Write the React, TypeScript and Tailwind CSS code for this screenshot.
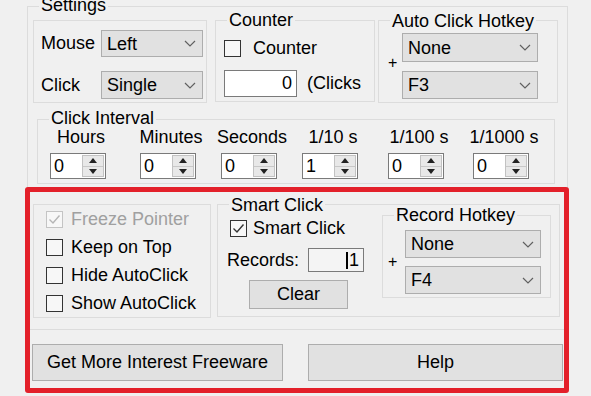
import React from 'react'

type Kids = { children?: React.ReactNode }

function Group({ label, className, labelTop, children }: Kids & { label?: string; className: string; labelTop?: string }) {
  return (
    <div className={`relative border border-[#dcdcdc] ${className}`}>
      {label && (
        <span className={`absolute left-[11px] bg-[#f0f0f0] px-[2px] leading-[20px] whitespace-nowrap ${labelTop ?? 'top-[-11px]'}`}>
          {label}
        </span>
      )}
      {children}
    </div>
  )
}

function Select({ value, className }: { value: string; className: string }) {
  return (
    <div className={`flex items-center justify-between border border-[#adadad] bg-[#e1e1e1] pl-[5px] pr-[6px] ${className}`}>
      <span className="leading-[20px]">{value}</span>
      <svg width="12" height="7" viewBox="0 0 12 7">
        <path d="M1 1l5 5 5-5" fill="none" stroke="#606060" strokeWidth="1.2" />
      </svg>
    </div>
  )
}

function Check({ checked, disabled }: { checked?: boolean; disabled?: boolean }) {
  return (
    <div
      className={`flex h-[17px] w-[17px] shrink-0 items-center justify-center border bg-[#f7f7f7] ${
        disabled ? 'border-[#c4c4c4]' : 'border-[#333333]'
      }`}
    >
      {checked && (
        <svg width="13" height="11" viewBox="0 0 13 11">
          <path
            d="M1.5 5.5l3.5 3.5 6.5-7.5"
            fill="none"
            stroke={disabled ? '#b5b5b5' : '#333333'}
            strokeWidth="1.4"
          />
        </svg>
      )}
    </div>
  )
}

function Spin({ value }: { value: string }) {
  return (
    <div className="flex h-[26px] w-[56px] border border-[#7a7a7a] bg-white">
      <div className="flex-1 pl-[3px] leading-[24px]">{value}</div>
      <div className="my-[1px] mr-[1px] flex w-[22px] flex-col border border-[#c2c2c2] bg-[#e8e8e8]">
        <div className="flex flex-1 items-center justify-center border-b border-[#c8c8c8]">
          <svg width="8" height="5" viewBox="0 0 8 5">
            <path d="M0 5L4 0L8 5Z" fill="#222" />
          </svg>
        </div>
        <div className="flex flex-1 items-center justify-center">
          <svg width="8" height="5" viewBox="0 0 8 5">
            <path d="M0 0L4 5L8 0Z" fill="#222" />
          </svg>
        </div>
      </div>
    </div>
  )
}

function Button({ children, className }: Kids & { className: string }) {
  return (
    <div className={`flex items-center justify-center border border-[#adadad] bg-[#e1e1e1] ${className}`}>
      {children}
    </div>
  )
}

const intervals = [
  { label: 'Hours', value: '0', ml: 'ml-[12px]' },
  { label: 'Minutes', value: '0', ml: 'ml-[34px]' },
  { label: 'Seconds', value: '0', ml: 'ml-[25px]' },
  { label: '1/10 s', value: '1', ml: 'ml-[25px]' },
  { label: '1/100 s', value: '0', ml: 'ml-[30px]' },
  { label: '1/1000 s', value: '0', ml: 'ml-[29px]' },
]

export default function App() {
  return (
    <div className="relative h-[396px] w-[591px] overflow-hidden bg-[#f0f0f0] font-['Liberation_Sans',Arial,sans-serif] text-[18px] text-black">
      {/* Settings frame */}
      <Group label="Settings" labelTop="top-[-12px]" className="ml-[27px] mt-[6px] h-[324px] w-[541px]">
        {/* Top row */}
        <div className="mt-[13px] flex items-start">
          <Group className="ml-[5px] h-[83px] w-[174px] pl-[7px] pt-[9px]">
            <div className="flex h-[27px] items-center">
              <span className="w-[60px]">Mouse</span>
              <Select value="Left" className="h-[27px] w-[102px]" />
            </div>
            <div className="mt-[14px] flex h-[28px] items-center">
              <span className="w-[60px]">Click</span>
              <Select value="Single" className="h-[28px] w-[102px]" />
            </div>
          </Group>

          <Group label="Counter" className="ml-[8px] h-[82px] w-[160px] pl-[8px] pt-[19px]">
            <div className="flex h-[16px] items-center">
              <Check />
              <span className="ml-[12px]">Counter</span>
            </div>
            <div className="mt-[14px] flex items-center">
              <div className="h-[27px] w-[73px] border border-[#7a7a7a] bg-white pr-[4px] text-right leading-[25px]">0</div>
              <span className="ml-[10px] whitespace-nowrap">(Clicks</span>
            </div>
          </Group>

          <Group label="Auto Click Hotkey" labelTop="top-[-10px]" className="ml-[3px] flex h-[83px] w-[180px] items-start pl-[9px] pt-[12px]">
            <span className="mt-[20px] w-[14px] text-[16px] leading-[20px]">+</span>
            <div className="flex flex-col gap-[9px]">
              <Select value="None" className="h-[29px] w-[136px]" />
              <Select value="F3" className="h-[28px] w-[136px]" />
            </div>
          </Group>
        </div>

        {/* Click interval */}
        <Group label="Click Interval" labelTop="top-[-12px]" className="ml-[9px] mt-[16px] flex h-[65px] w-[518px] pt-[7px]">
          {intervals.map(i => (
            <div key={i.label} className={`flex w-[56px] flex-col items-center ${i.ml}`}>
              <span className="whitespace-nowrap pl-[6px] leading-[20px]">{i.label}</span>
              <div className="mt-[6px]">
                <Spin value={i.value} />
              </div>
            </div>
          ))}
        </Group>

        {/* Bottom row */}
        <div className="mt-[20px] flex items-start">
          <Group className="ml-[5px] h-[114px] w-[178px] pl-[12px]">
            <div className="flex h-[28px] items-center">
              <Check checked disabled />
              <span className="ml-[8px] text-[#a0a0a0]">Freeze Pointer</span>
            </div>
            <div className="flex h-[28px] items-center">
              <Check />
              <span className="ml-[8px]">Keep on Top</span>
            </div>
            <div className="flex h-[28px] items-center">
              <Check />
              <span className="ml-[8px]">Hide AutoClick</span>
            </div>
            <div className="flex h-[28px] items-center">
              <Check />
              <span className="ml-[8px]">Show AutoClick</span>
            </div>
          </Group>

          <Group label="Smart Click" labelTop="top-[-10px]" className="ml-[6px] flex h-[113px] w-[343px] items-start">
            <div className="w-[164px]">
              <div className="ml-[12px] mt-[15px] flex h-[17px] items-center">
                <Check checked />
                <span className="ml-[6px]">Smart Click</span>
              </div>
              <div className="ml-[9px] mt-[11px] flex h-[24px] items-center">
                <span className="w-[81px]">Records:</span>
                <div className="flex h-[24px] w-[56px] items-center justify-end border border-[#7a7a7a] bg-[#f4f4f4] pr-[4px]">
                  <div className="mr-[1px] h-[17px] w-[2px] bg-black" />
                  <span className="leading-[20px]">1</span>
                </div>
              </div>
              <Button className="ml-[31px] mt-[8px] h-[29px] w-[99px]">Clear</Button>
            </div>
            <Group label="Record Hotkey" className="mt-[10px] flex h-[83px] w-[169px] items-start pl-[5px] pt-[14px]">
              <span className="mt-[22px] w-[17px] text-[16px] leading-[20px]">+</span>
              <div className="flex flex-col gap-[8px]">
                <Select value="None" className="h-[28px] w-[136px]" />
                <Select value="F4" className="h-[28px] w-[136px]" />
              </div>
            </Group>
          </Group>
        </div>
      </Group>

      {/* Buttons */}
      <div className="mt-[14px] flex">
        <Button className="ml-[32px] h-[37px] w-[251px]">Get More Interest Freeware</Button>
        <Button className="ml-[25px] h-[37px] w-[255px]">Help</Button>
      </div>

      {/* Red highlight */}
      <div className="pointer-events-none absolute left-[25px] top-[187px] h-[206px] w-[544px] rounded-[3px] border-[5px] border-[#e3202a]" />
    </div>
  )
}
